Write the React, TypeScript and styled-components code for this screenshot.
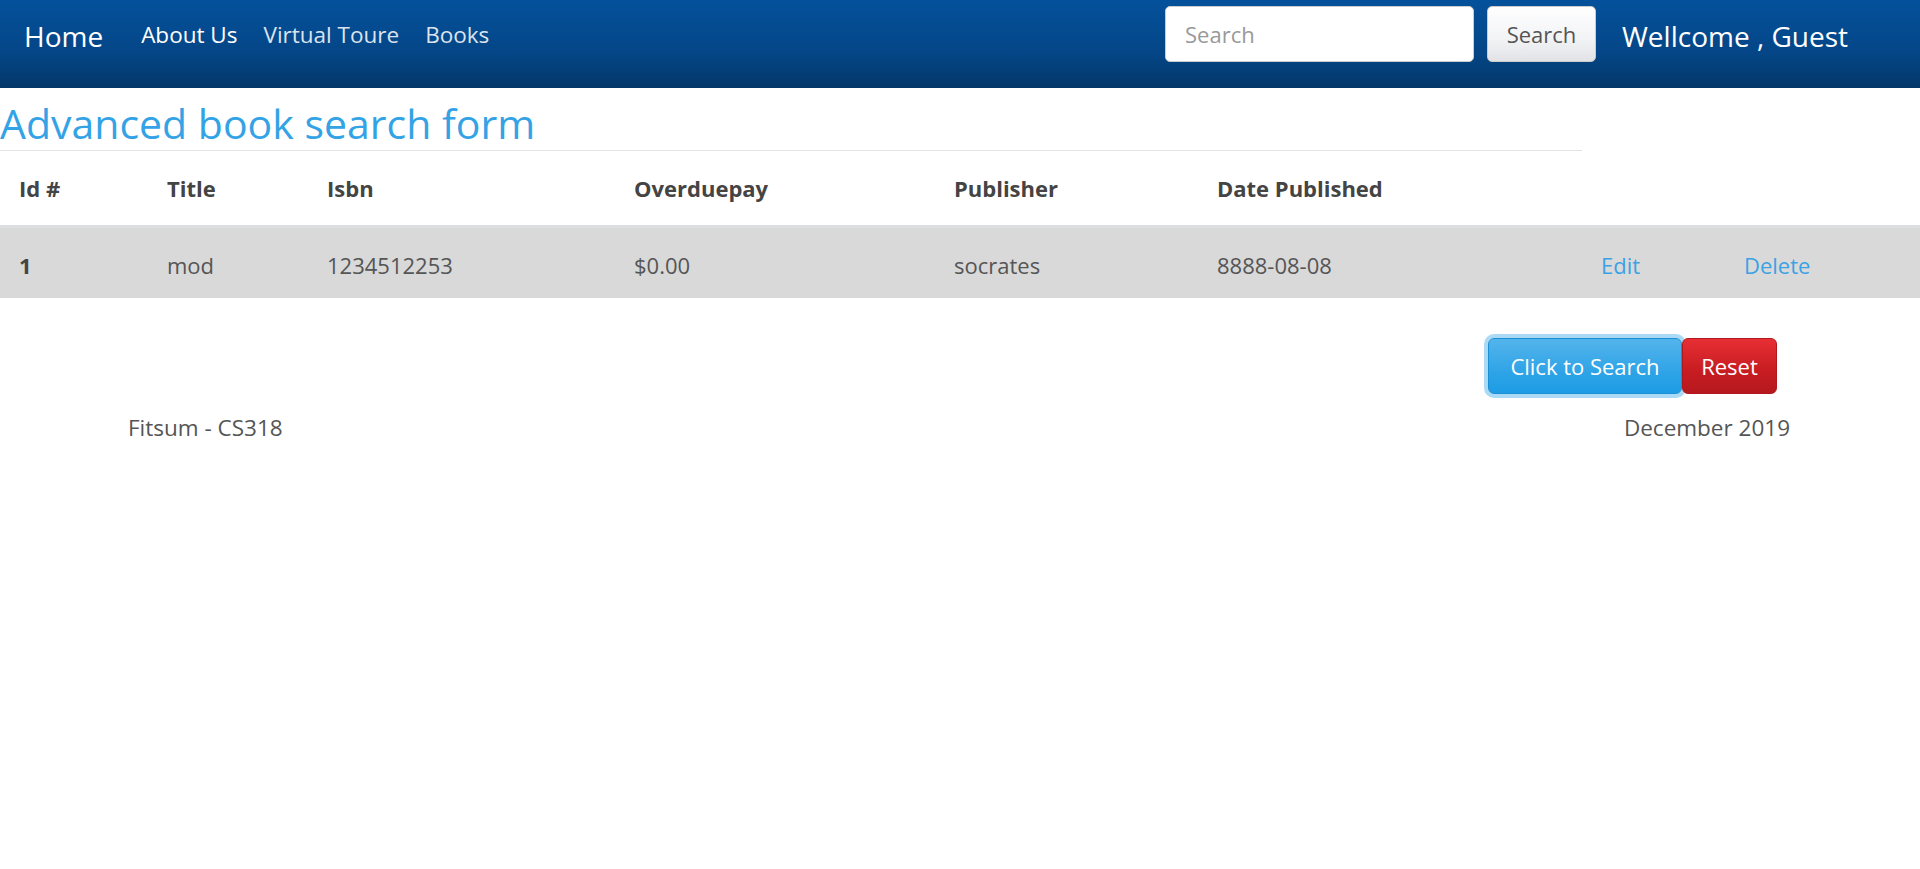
import React from "react";
import styled, { createGlobalStyle } from "styled-components";

const GlobalStyle = createGlobalStyle`
  html, body { margin: 0; padding: 0; background: #fff; }
  body {
    font-family: "Open Sans", "Noto Sans", "Liberation Sans", sans-serif;
    color: #555;
    font-size: 22px;
  }
  * { box-sizing: border-box; }
`;

const Navbar = styled.nav`
  height: 88px;
  display: flex;
  align-items: flex-start;
  padding: 6px 72px 0 24px;
  background: linear-gradient(#04519b, #044687 60%, #033769);
`;

const NavRow = styled.div`
  height: 56px;
  display: flex;
  align-items: center;
`;

const Brand = styled.a`
  font-size: 28px;
  color: #fff;
  text-decoration: none;
  padding-top: 3px;
`;

const NavList = styled.div`
  display: flex;
  gap: 26px;
  margin-left: 38px;
  padding-top: 1px;
`;

const NavLink = styled.a<{ $active?: boolean }>`
  font-size: 22.5px;
  color: ${(p) => (p.$active ? "#ffffff" : "#dde3ec")};
  text-decoration: none;
`;

const RightGroup = styled(NavRow)`
  margin-left: auto;
`;

const SearchInput = styled.input`
  width: 309px;
  height: 56px;
  border: 1px solid #c9ccd1;
  border-radius: 5px;
  padding: 0 19px;
  font-family: inherit;
  font-size: 22px;
  color: #555;
  background: #fff;
  &::placeholder { color: #999; }
`;

const SearchButton = styled.button`
  margin-left: 13px;
  width: 109px;
  height: 56px;
  border: 1px solid #ccc;
  border-radius: 5px;
  background: linear-gradient(#ffffff, #f2f3f5 60%, #e1e3e6);
  font-family: inherit;
  font-size: 22px;
  color: #555;
  padding: 0;
`;

const Welcome = styled.span`
  margin-left: 26px;
  font-size: 28px;
  color: #fff;
  padding-top: 3px;
`;

const HeaderBlock = styled.div`
  width: 1582px;
  border-bottom: 1px solid #e3e3e6;
  padding: 13px 0 4px;
`;

const Title = styled.h2`
  margin: 0;
  font-size: 41px;
  font-weight: 400;
  line-height: 45px;
  color: #34a3e6;
`;

const Table = styled.table`
  width: 100%;
  border-collapse: collapse;
  table-layout: fixed;
`;

const Th = styled.th`
  height: 75px;
  padding: 0 19px;
  text-align: left;
  vertical-align: middle;
  font-size: 22px;
  font-weight: 700;
  color: #444;
  border-bottom: 3px solid #dcdee2;
  white-space: nowrap;
`;

const Row = styled.tr`
  background: #d9d9d9;
`;

const Td = styled.td<{ $bold?: boolean }>`
  height: 72px;
  padding: 4px 19px 0;
  vertical-align: middle;
  font-size: 22px;
  font-weight: ${(p) => (p.$bold ? 700 : 400)};
  color: ${(p) => (p.$bold ? "#444" : "#555")};
  white-space: nowrap;
`;

const ActionLink = styled.a`
  color: #3ba2e4;
  text-decoration: none;
`;

const ButtonRow = styled.div`
  display: flex;
  justify-content: flex-end;
  padding-right: 143px;
  margin-top: 40px;
`;

const Btn = styled.button<{ $variant: "primary" | "danger"; $w: number }>`
  position: relative;
  width: ${(p) => p.$w}px;
  height: 56px;
  border-radius: 6px;
  font-family: inherit;
  font-size: 22px;
  color: #fff;
  padding: 0;
  border: 1px solid ${(p) => (p.$variant === "primary" ? "#1a8fd4" : "#b0181d")};
  background: ${(p) =>
    p.$variant === "primary"
      ? "linear-gradient(#54b4eb, #2fa4e7 60%, #1d9ce5)"
      : "linear-gradient(#e72f34, #c71c22 60%, #b5191e)"};
  box-shadow: ${(p) =>
    p.$variant === "primary" ? "0 0 0 4px rgba(102, 187, 238, 0.55)" : "none"};
`;

const Footer = styled.footer`
  display: flex;
  justify-content: space-between;
  padding: 0 130px 0 128px;
  margin-top: 19px;
  font-size: 22.5px;
  line-height: 30px;
  color: #555;
`;

const widths = [148, 160, 307, 320, 263, 384, 143, 195];

export default function App() {
  return (
    <>
      <GlobalStyle />
      <Navbar>
        <NavRow>
          <Brand href="#">Home</Brand>
          <NavList>
            <NavLink href="#" $active>About Us</NavLink>
            <NavLink href="#">Virtual Toure</NavLink>
            <NavLink href="#">Books</NavLink>
          </NavList>
        </NavRow>
        <RightGroup>
          <SearchInput placeholder="Search" />
          <SearchButton>Search</SearchButton>
          <Welcome>Wellcome , Guest</Welcome>
        </RightGroup>
      </Navbar>
      <HeaderBlock>
        <Title>Advanced book search form</Title>
      </HeaderBlock>
      <Table>
        <colgroup>
          {widths.map((w, i) => (
            <col key={i} style={{ width: w }} />
          ))}
        </colgroup>
        <thead>
          <tr>
            <Th>Id #</Th>
            <Th>Title</Th>
            <Th>Isbn</Th>
            <Th>Overduepay</Th>
            <Th>Publisher</Th>
            <Th>Date Published</Th>
            <Th></Th>
            <Th></Th>
          </tr>
        </thead>
        <tbody>
          <Row>
            <Td $bold>1</Td>
            <Td>mod</Td>
            <Td>1234512253</Td>
            <Td>$0.00</Td>
            <Td>socrates</Td>
            <Td>8888-08-08</Td>
            <Td><ActionLink href="#">Edit</ActionLink></Td>
            <Td><ActionLink href="#">Delete</ActionLink></Td>
          </Row>
        </tbody>
      </Table>
      <ButtonRow>
        <Btn $variant="primary" $w={194}>Click to Search</Btn>
        <Btn $variant="danger" $w={95}>Reset</Btn>
      </ButtonRow>
      <Footer>
        <span>Fitsum - CS318</span>
        <span>December 2019</span>
      </Footer>
    </>
  );
}
